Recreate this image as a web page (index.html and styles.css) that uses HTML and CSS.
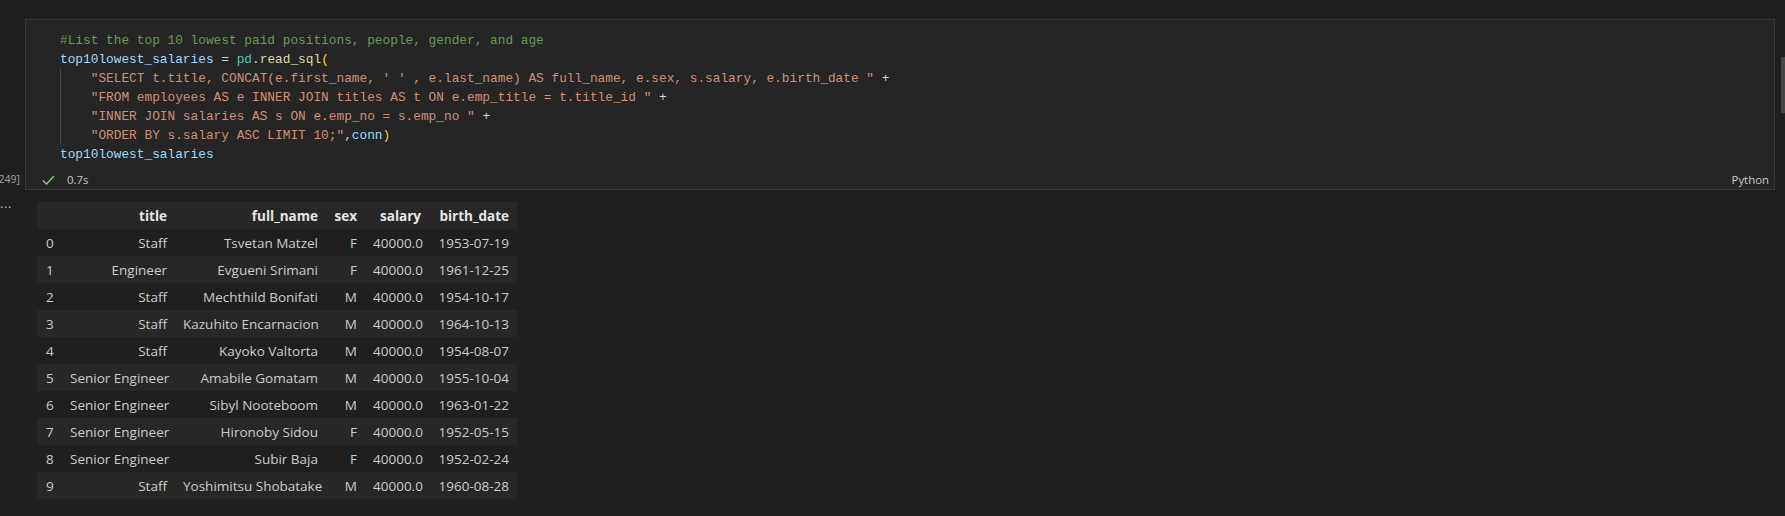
FILE: index.html
```html
<!DOCTYPE html>
<html lang="en">
<head>
<meta charset="utf-8">
<title>Notebook</title>
<link rel="stylesheet" href="styles.css">
</head>
<body>
<div class="notebook">
  <div class="cell-row">
    <div class="gutter"><span class="exec-count">[249]</span></div>
    <div class="cell">
      <div class="code">
        <div class="line"><span class="cm">#List the top 10 lowest paid positions, people, gender, and age</span></div>
        <div class="line"><span class="var">top10lowest_salaries</span> <span class="op">=</span> <span class="cls">pd</span><span class="op">.</span><span class="fn">read_sql</span><span class="br">(</span></div>
        <div class="indent-block">
          <div class="line">    <span class="str">"SELECT t.title, CONCAT(e.first_name, ' ' , e.last_name) AS full_name, e.sex, s.salary, e.birth_date "</span> <span class="op">+</span></div>
          <div class="line">    <span class="str">"FROM employees AS e INNER JOIN titles AS t ON e.emp_title = t.title_id "</span> <span class="op">+</span></div>
          <div class="line">    <span class="str">"INNER JOIN salaries AS s ON e.emp_no = s.emp_no "</span> <span class="op">+</span></div>
          <div class="line">    <span class="str">"ORDER BY s.salary ASC LIMIT 10;"</span><span class="op">,</span><span class="var">conn</span><span class="br">)</span></div>
        </div>
        <div class="line"><span class="var">top10lowest_salaries</span></div>
      </div>
      <div class="status">
        <div class="status-left">
          <svg class="check" width="13" height="12" viewBox="0 0 13 12"><polyline points="1,6.5 4.5,10 12,2" fill="none" stroke="#89d185" stroke-width="1.3"/></svg>
          <span class="duration">0.7s</span>
        </div>
        <span class="lang">Python</span>
      </div>
    </div>
  </div>
  <div class="output-row">
    <div class="out-gutter"><span class="dots">...</span></div>
    <table class="df">
      <colgroup>
        <col class="w-idx"><col class="w-title"><col class="w-name"><col class="w-sex"><col class="w-sal"><col class="w-date">
      </colgroup>
      <thead>
        <tr><th></th><th>title</th><th>full_name</th><th>sex</th><th>salary</th><th>birth_date</th></tr>
      </thead>
      <tbody>
        <tr><th>0</th><td>Staff</td><td>Tsvetan Matzel</td><td>F</td><td>40000.0</td><td>1953-07-19</td></tr>
        <tr><th>1</th><td>Engineer</td><td>Evgueni Srimani</td><td>F</td><td>40000.0</td><td>1961-12-25</td></tr>
        <tr><th>2</th><td>Staff</td><td>Mechthild Bonifati</td><td>M</td><td>40000.0</td><td>1954-10-17</td></tr>
        <tr><th>3</th><td>Staff</td><td>Kazuhito Encarnacion</td><td>M</td><td>40000.0</td><td>1964-10-13</td></tr>
        <tr><th>4</th><td>Staff</td><td>Kayoko Valtorta</td><td>M</td><td>40000.0</td><td>1954-08-07</td></tr>
        <tr><th>5</th><td>Senior Engineer</td><td>Amabile Gomatam</td><td>M</td><td>40000.0</td><td>1955-10-04</td></tr>
        <tr><th>6</th><td>Senior Engineer</td><td>Sibyl Nooteboom</td><td>M</td><td>40000.0</td><td>1963-01-22</td></tr>
        <tr><th>7</th><td>Senior Engineer</td><td>Hironoby Sidou</td><td>F</td><td>40000.0</td><td>1952-05-15</td></tr>
        <tr><th>8</th><td>Senior Engineer</td><td>Subir Baja</td><td>F</td><td>40000.0</td><td>1952-02-24</td></tr>
        <tr><th>9</th><td>Staff</td><td>Yoshimitsu Shobatake</td><td>M</td><td>40000.0</td><td>1960-08-28</td></tr>
      </tbody>
    </table>
  </div>
</div>
<div class="scrollbar"></div>
</body>
</html>
```

FILE: styles.css
```css
html, body {
  margin: 0;
  padding: 0;
  background: #1f1f1f;
  overflow: hidden;
  height: 100%;
}

body {
  font-family: "Open Sans", "Noto Sans", sans-serif;
  color: #cccccc;
}

.notebook {
  padding-top: 19px;
}

.cell-row {
  display: flex;
}

.gutter {
  width: 25px;
  flex: none;
  display: flex;
  align-items: flex-end;
  justify-content: flex-end;
  overflow: visible;
}

.exec-count {
  font-family: "Open Sans", sans-serif;
  font-size: 10.5px;
  line-height: 19px;
  height: 19px;
  margin-bottom: 1px;
  padding-right: 5px;
  color: #a0a0a0;
  white-space: nowrap;
}

.cell {
  flex: 1;
  margin-right: 10px;
  border: 1px solid #3a3a3a;
  background: #252525;
}

.code {
  padding: 11px 0 6px 34px;
  font-family: "Liberation Mono", "DejaVu Sans Mono", monospace;
  font-size: 12.8px;
  color: #d4d4d4;
}

.line {
  height: 19px;
  line-height: 19px;
  white-space: pre;
}

.indent-block {
  box-shadow: inset 1px 0 0 #4a4a4a;
}

.cm { color: #6a9955; }
.var { color: #9cdcfe; }
.cls { color: #4ec9b0; }
.fn { color: #dcdcaa; }
.br { color: #ffd700; }
.str { color: #ce9178; }
.op { color: #d4d4d4; }

.status {
  height: 19px;
  display: flex;
  align-items: center;
  justify-content: space-between;
  padding: 0 5px 0 16px;
  font-size: 11.4px;
}

.status-left {
  display: flex;
  align-items: center;
}

.check {
  display: block;
  margin-right: 12px;
}

.duration {
  color: #c8c8c8;
}

.lang {
  color: #c8c8c8;
}

.output-row {
  display: flex;
  margin-top: 12px;
}

.out-gutter {
  width: 37px;
  flex: none;
}

.dots {
  display: block;
  font-size: 13px;
  line-height: 13px;
  margin-top: -5px;
  letter-spacing: 0.6px;
  color: #b5b5b5;
}

.df {
  border-collapse: collapse;
  table-layout: fixed;
  width: 480px;
  font-family: "Open Sans", "Noto Sans", sans-serif;
  font-size: 13.5px;
  color: #cccccc;
}

.w-idx { width: 25px; }
.w-title { width: 113px; }
.w-name { width: 151px; }
.w-sex { width: 39px; }
.w-sal { width: 64px; }
.w-date { width: 88px; }

.df th,
.df td {
  height: 27px;
  padding: 0 8px;
  text-align: right;
  white-space: nowrap;
  overflow: visible;
}

.df thead th {
  font-weight: 700;
  color: #e6e6e6;
}

.df tbody th {
  text-align: left;
  font-weight: 400;
  padding-left: 9px;
}

.df thead tr,
.df tbody tr:nth-child(even) {
  background: #272727;
}

.scrollbar {
  position: fixed;
  top: 57px;
  right: 0;
  width: 4px;
  height: 56px;
  background: #474747;
}
```
